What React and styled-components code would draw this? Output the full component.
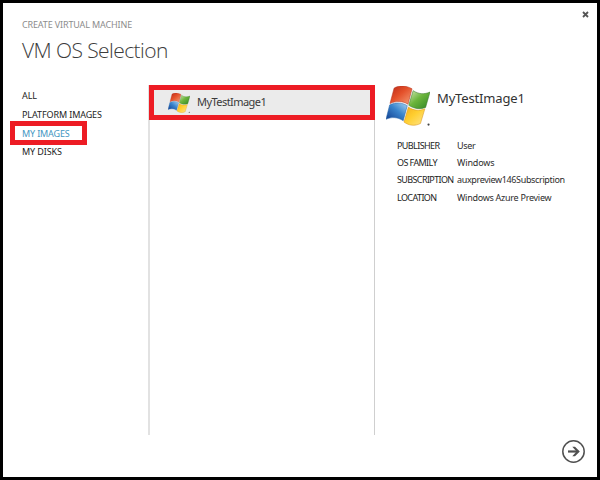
import React, { useId } from 'react';
import styled, { createGlobalStyle } from 'styled-components';

const Global = createGlobalStyle`
  * { box-sizing: border-box; }
  body { margin: 0; background: #000; font-family: "Noto Sans", "Open Sans", sans-serif; }
`;

const Dialog = styled.main`
  position: relative;
  width: 600px;
  height: 480px;
  border: 3px solid #000;
  background: #fff;
  overflow: hidden;
  color: #333;
`;

const Header = styled.header`
  height: 82px;
  padding: 15px 0 0 19px;
`;

const Eyebrow = styled.div`
  font-size: 9px;
  line-height: 14px;
  letter-spacing: -0.14px;
  color: #8c8c8c;
  white-space: nowrap;
`;

const Title = styled.h1`
  margin: 2px 0 0;
  font: 300 21px/32px "Open Sans", sans-serif;
  letter-spacing: -0.58px;
  color: #3c3c3c;
  white-space: nowrap;
`;

const Columns = styled.div`
  display: grid;
  grid-template-columns: 145px 227px 1fr;
  height: 350px;
`;

const Nav = styled.nav`
  display: flex;
  flex-direction: column;
  align-items: flex-start;
  padding: 1px 0 0 7px;
`;

const NavItem = styled.a`
  display: flex;
  align-items: center;
  width: 77px;
  height: ${(p) => (p.$active ? 24 : 19)}px;
  margin: ${(p) => (p.$active ? '-3px 0 -3px' : '0')};
  padding-top: ${(p) => (p.$active ? 1 : 0)}px;
  padding-left: ${(p) => (p.$active ? 7 : 12)}px;
  border: ${(p) => (p.$active ? '5px solid #ed1c24' : '0')};
  font-size: 9px;
  line-height: 12px;
  letter-spacing: ${(p) => p.$spacing || 0}px;
  color: ${(p) => (p.$active ? '#4296c2' : '#1c1c1c')};
  white-space: nowrap;
`;

const ImageList = styled.section`
  border-left: 2px solid #e2e2e2;
  border-right: 1px solid #cfcfcf;
`;

const ImageRow = styled.div`
  display: flex;
  align-items: center;
  width: 226px;
  height: 35px;
  margin-left: -1px;
  padding-left: 14px;
  border: 5px solid #ed1c24;
  background: #ebebeb;
  font-size: 11px;
  letter-spacing: ${(p) => p.$spacing}px;
  color: #3a3a3a;
`;

const RowName = styled.span`
  margin: -1px 0 0 7px;
  line-height: 16px;
`;

const Details = styled.section`
  padding: 1px 0 0 11px;
`;

const DetailsHead = styled.div`
  display: flex;
  align-items: flex-start;
  height: 51px;
`;

const DetailsName = styled.h2`
  margin: 2px 0 0 7px;
  font-size: 13px;
  font-weight: 400;
  line-height: 20px;
  letter-spacing: -0.15px;
  color: #333;
`;

const Facts = styled.dl`
  display: grid;
  grid-template-columns: 60px 1fr;
  grid-auto-rows: 17.2px;
  margin: 0 0 0 11px;
  font-size: 9px;
  line-height: 17px;
  white-space: nowrap;
`;

const Label = styled.dt`
  color: #1c1c1c;
  letter-spacing: ${(p) => p.$spacing}px;
`;

const Value = styled.dd`
  margin: 0;
  color: #2c2c2c;
  letter-spacing: ${(p) => p.$spacing}px;
`;

const Close = styled.button`
  position: absolute;
  top: 8px;
  right: 8px;
  display: flex;
  padding: 0;
  border: 0;
  background: none;
`;

const Footer = styled.footer`
  display: flex;
  justify-content: flex-end;
  padding: 5px 12px 0 0;
`;

const Next = styled.button`
  display: flex;
  padding: 0;
  border: 0;
  background: none;
`;

function WindowsLogo({ width, height }) {
  const id = useId().replace(/[^a-zA-Z0-9]/g, '');
  const fills = [
    ['r', '#b92818', '#e4502a', '#f4a07a', 0, 1],
    ['g', '#d3e8b4', '#6cb53c', '#2e8424', 0, 1],
    ['b', '#a8d4f2', '#3a84cc', '#0f3a8c', 1, 0],
    ['y', '#f5ab1c', '#ffcf30', '#ffe58c', 0, 1],
  ];
  return (
    <svg width={width} height={height} viewBox="17 13 120 112" preserveAspectRatio="none" aria-hidden="true">
      <defs>
        {fills.map(([k, a, b, c, x1, x2]) => (
          <linearGradient key={k} id={id + k} x1={x1} y1="0" x2={x2} y2="1">
            <stop offset="0" stopColor={a} />
            <stop offset="0.45" stopColor={b} />
            <stop offset="1" stopColor={c} />
          </linearGradient>
        ))}
      </defs>
      <path d="M39 19C53 10 71 11 88 21L77 64C63 55 45 54 28 62Z" fill={`url(#${id}r)`} stroke="#b43420" strokeWidth="1.5" />
      <path d="M91 26C106 36 121 37 137 30L125 73C109 79 94 77 79 67Z" fill={`url(#${id}g)`} stroke="#39782c" strokeWidth="1.5" />
      <path d="M27 66C44 58 60 59 75 68L64 110C48 100 33 99 17 106Z" fill={`url(#${id}b)`} stroke="#2865a9" strokeWidth="1.5" />
      <path d="M78 72C93 82 108 83 123 77L111 118C95 126 80 124 66 114Z" fill={`url(#${id}y)`} stroke="#d7951c" strokeWidth="1.5" />
      <circle cx="133" cy="121" r="3" fill="#444" />
    </svg>
  );
}

const navItems = [
  { text: 'ALL', spacing: -0.1 },
  { text: 'PLATFORM IMAGES', spacing: -0.1 },
  { text: 'MY IMAGES', spacing: -0.15, active: true },
  { text: 'MY DISKS', spacing: -0.1 },
];

const facts = [
  ['PUBLISHER', 'User', -0.6, -0.3],
  ['OS FAMILY', 'Windows', -0.6, -0.15],
  ['SUBSCRIPTION', 'auxpreview146Subscription', -0.62, -0.35],
  ['LOCATION', 'Windows Azure Preview', -0.6, -0.27],
];

export default function App() {
  return (
    <>
      <Global />
      <Dialog>
        <Close aria-label="Close">
          <svg width="7" height="7" viewBox="0 0 7 7">
            <path d="M1 1L6 6M6 1L1 6" stroke="#555" strokeWidth="1.8" />
          </svg>
        </Close>
        <Header>
          <Eyebrow>CREATE VIRTUAL MACHINE</Eyebrow>
          <Title>VM OS Selection</Title>
        </Header>
        <Columns>
          <Nav>
            {navItems.map((item) => (
              <NavItem key={item.text} $active={item.active} $spacing={item.spacing}>{item.text}</NavItem>
            ))}
          </Nav>
          <ImageList>
            <ImageRow $spacing={-0.55}>
              <WindowsLogo width={22} height={20} />
              <RowName>MyTestImage1</RowName>
            </ImageRow>
          </ImageList>
          <Details>
            <DetailsHead>
              <WindowsLogo width={44} height={40} />
              <DetailsName>MyTestImage1</DetailsName>
            </DetailsHead>
            <Facts>
              {facts.map(([label, value, ls, vs]) => (
                <React.Fragment key={label}>
                  <Label $spacing={ls}>{label}</Label>
                  <Value $spacing={vs}>{value}</Value>
                </React.Fragment>
              ))}
            </Facts>
          </Details>
        </Columns>
        <Footer>
          <Next aria-label="Next">
            <svg width="23" height="23" viewBox="0 0 23 23" fill="none" stroke="#505050">
              <circle cx="11.5" cy="11.5" r="10.7" strokeWidth="1.5" />
              <path d="M6 11.5H16" strokeWidth="2.2" />
              <path d="M10.3 6.8H13L17.8 11.5L13 16.2H10.3L14.5 11.5Z" fill="#505050" stroke="none" />
            </svg>
          </Next>
        </Footer>
      </Dialog>
    </>
  );
}
